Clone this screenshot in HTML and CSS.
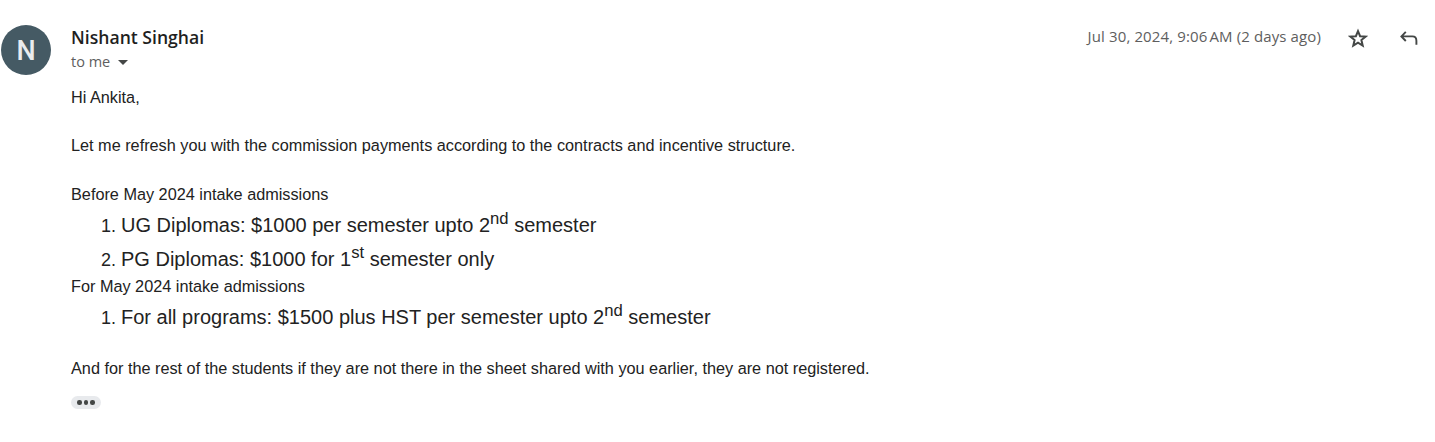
FILE: index.html
```
<!DOCTYPE html>
<html lang="en">

<head>
    <meta charset="UTF-8">
    <meta name="viewport" content="width=device-width, initial-scale=1.0">
    <title>Message - Nishant Singhai</title>
    <link rel="stylesheet" href="styles.css">
</head>

<body>
    <div class="message">
        <div class="avatar">N</div>

        <div class="content">
            <header class="message-header">
                <div class="sender">
                    <h3 class="sender-name">Nishant Singhai</h3>
                    <div class="recipient">
                        <span class="recipient-text">to me</span>
                        <span class="caret"></span>
                    </div>
                </div>
                <div class="message-meta">
                    <span class="date">Jul 30, 2024, 9:06&#8239;AM (2 days ago)</span>
                    <button class="icon-btn star" aria-label="Star">
                        <svg width="20" height="20" viewBox="0 0 20 20" fill="none" stroke="currentColor" stroke-width="2">
                            <path d="M10 3.2L12.1 8.2L17.6 8.6L13.4 12.1L14.7 17.5L10 14.6L5.3 17.5L6.6 12.1L2.4 8.6L7.9 8.2Z" />
                        </svg>
                    </button>
                    <button class="icon-btn reply" aria-label="Reply">
                        <svg width="20" height="18" viewBox="0 0 20 18" fill="none" stroke="currentColor" stroke-width="1.9">
                            <path d="M6.8 2.8L2.4 7.4L6.8 12M2.4 7.4H13.4Q17.4 7.4 17.4 11.8V15.8" />
                        </svg>
                    </button>
                </div>
            </header>

            <div class="message-body">
                <p>Hi Ankita,</p>
                <p class="spaced">Let me refresh you with the commission payments according to the contracts and incentive structure.</p>
                <p class="spaced">Before May 2024 intake admissions</p>
                <ol>
                    <li><span>UG Diplomas: $1000 per semester upto 2<sup>nd</sup> semester</span></li>
                    <li><span>PG Diplomas: $1000 for 1<sup>st</sup> semester only</span></li>
                </ol>
                <p>For May 2024 intake admissions</p>
                <ol>
                    <li><span>For all programs: $1500 plus HST per semester upto 2<sup>nd</sup> semester</span></li>
                </ol>
                <p class="spaced">And for the rest of the students if they are not there in the sheet shared with you earlier, they are not registered.</p>
            </div>

            <button class="trimmed" aria-label="Show trimmed content">
                <i></i><i></i><i></i>
            </button>
        </div>
    </div>
</body>

</html>
```
FILE: styles.css
```
* {
    margin: 0;
    padding: 0;
    box-sizing: border-box;
}

body {
    background-color: #fff;
    color: #222;
    font-family: "Liberation Sans", Arial, sans-serif;
}

button {
    border: none;
    background: none;
    cursor: pointer;
}

.message {
    display: flex;
    gap: 20px;
    padding: 25px 16px 0 1px;
}

.avatar {
    flex-shrink: 0;
    width: 50px;
    height: 50px;
    border-radius: 50%;
    background-color: #455a64;
    color: #e9ecee;
    font-family: Roboto, sans-serif;
    font-size: 27px;
    font-weight: 500;
    line-height: 52px;
    text-align: center;
}

.content {
    flex: 1;
}

.message-header {
    display: flex;
    justify-content: space-between;
    height: 60px;
}

.sender-name {
    color: #1f1f1f;
    font-family: "Open Sans", sans-serif;
    font-size: 17.6px;
    font-weight: 600;
    line-height: 24px;
}

.recipient {
    display: flex;
    align-items: center;
    gap: 8px;
    height: 25px;
    color: #5e5e5e;
    font-family: "Open Sans", sans-serif;
    font-size: 14.5px;
}

.caret {
    margin-top: 2px;
    border: 5px solid transparent;
    border-top-color: #444746;
    border-bottom: none;
}

.message-meta {
    display: flex;
    align-items: center;
    height: 26px;
    color: #5e5e5e;
}

.date {
    padding-bottom: 3px;
    font-family: "Open Sans", sans-serif;
    font-size: 15px;
    letter-spacing: 0.12px;
    line-height: 23px;
    white-space: nowrap;
}

.icon-btn {
    display: flex;
    color: #444746;
}

.star {
    margin-left: 27px;
}

.reply {
    margin-left: 31px;
}

/* Body text */
.message-body {
    font-size: 16.25px;
    line-height: 24.2px;
}

.message-body .spaced {
    margin-top: 24.2px;
}

.message-body ol {
    padding-left: 50px;
}

.message-body li {
    height: 33.8px;
    padding-top: 5px;
    font-size: 18px;
    line-height: 28px;
}

.message-body li span {
    font-size: 20px;
}

.message-body sup {
    font-size: 16.67px;
    line-height: 0;
}

.trimmed {
    display: flex;
    align-items: center;
    justify-content: center;
    gap: 2px;
    width: 30px;
    height: 13px;
    margin-top: 16px;
    border-radius: 7px;
    background-color: #e8eaed;
}

.trimmed i {
    width: 4.5px;
    height: 4.5px;
    border-radius: 50%;
    background-color: #444746;
}
```
